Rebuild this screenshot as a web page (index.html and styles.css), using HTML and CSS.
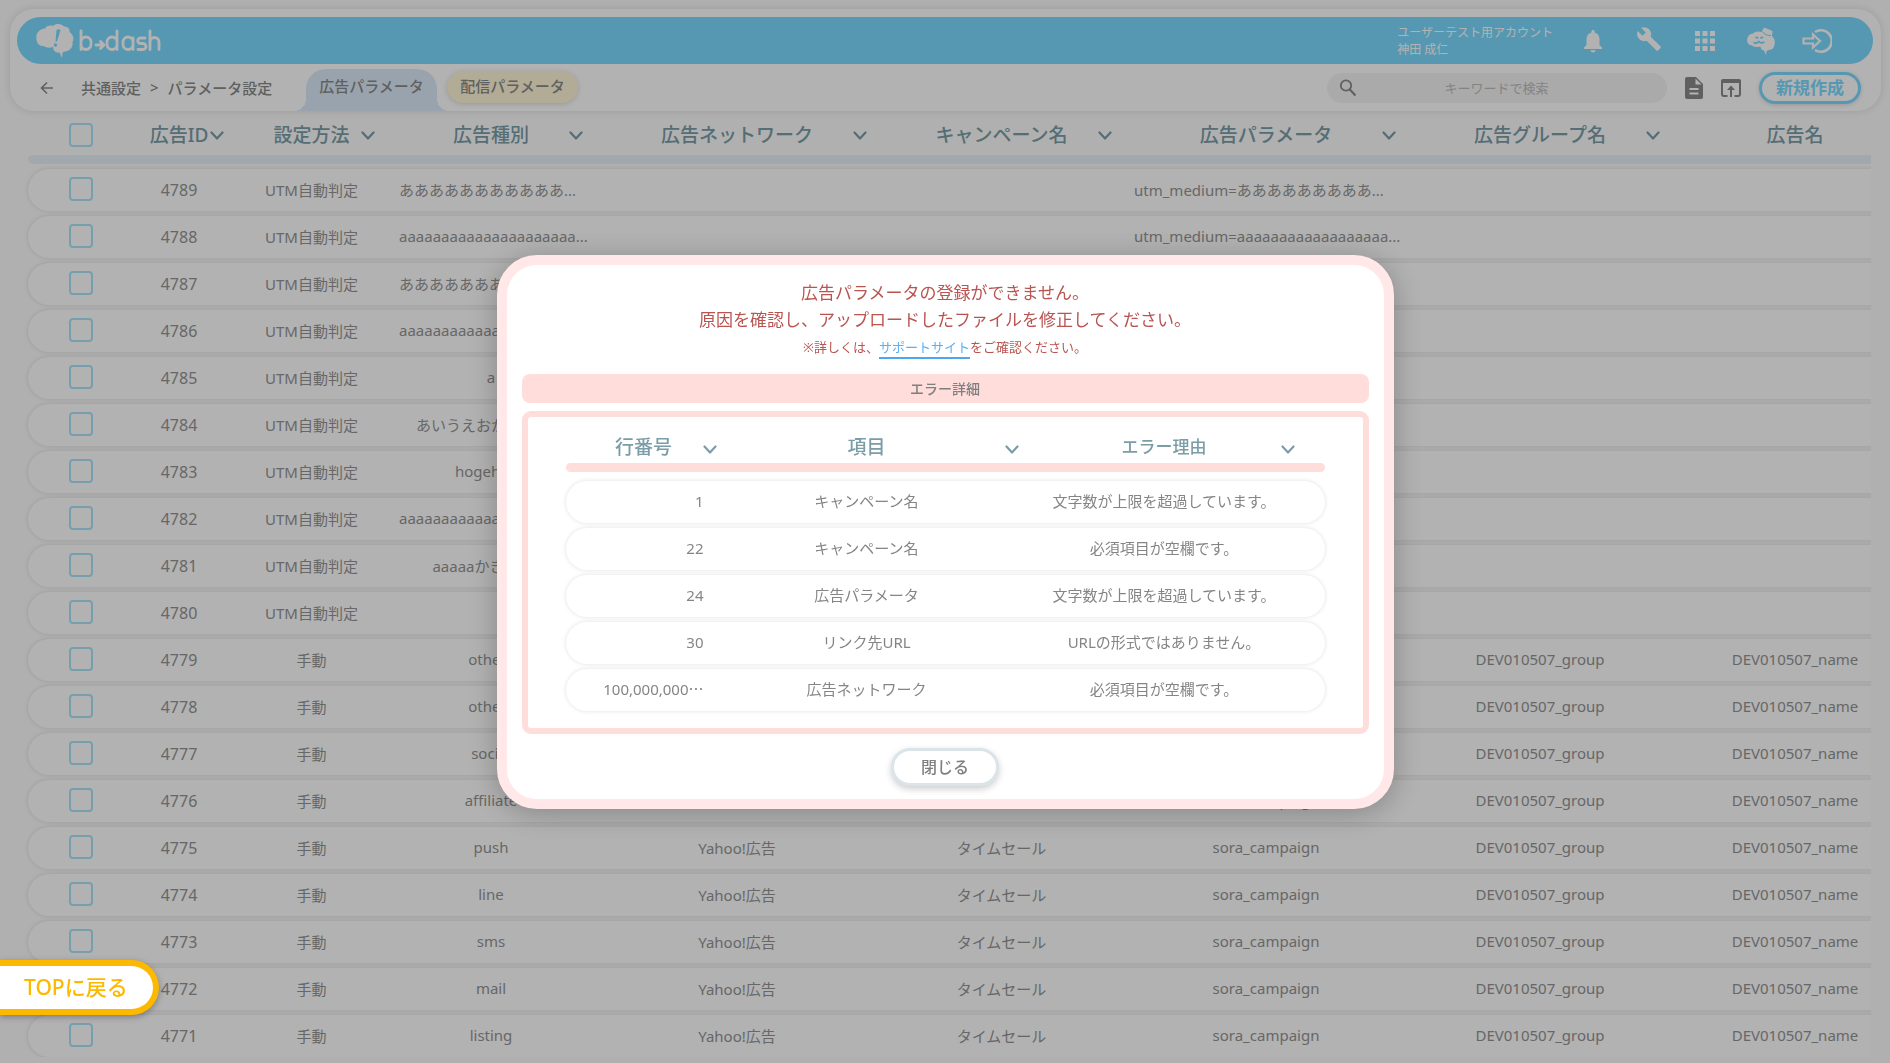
FILE: index.html
```
<!DOCTYPE html>
<html lang="ja">
<head>
    <meta charset="UTF-8">
    <meta name="viewport" content="width=device-width, initial-scale=1.0">
    <title>パラメータ設定 | b→dash</title>
    <link rel="stylesheet" href="styles.css">
</head>
<body>
    <svg class="defs" aria-hidden="true">
        <symbol id="chevron" viewBox="0 0 14 10"><path d="M1.5 1.5 L7 7.5 L12.5 1.5" fill="none" stroke="currentColor" stroke-width="2.2" stroke-linecap="round" stroke-linejoin="round"/></symbol>
    </svg>

    <header class="header">
        <div class="topbar">
            <a class="logo" href="#" aria-label="b→dash">
                <svg class="logo-mark" viewBox="0 0 38 34"><path d="M9 4.500C10 2 14 1 17 2C20-1 26-.3 28 2.500C32 2 34 5 33.500 8C37 10 38.500 15 36.500 18C37.500 23 33.500 27.500 29 27.500L26.500 28.500L26 34L23.500 28.500C19 29 17 26 17 23C14 24 10 24 8 22C3 22.500 0 18 .5 14C-.5 9 4 5 9 4.500Z" fill="#fff"/><path d="M20.500 6Q22.500 4.500 24.500 6L21 17.500H19.500Z" fill="#7cdaff"/><circle cx="19.500" cy="21" r="1.700" fill="#7cdaff"/></svg>
                <svg class="logo-word" viewBox="0 0 84 24" fill="none" stroke="#fff" stroke-width="2.800" stroke-linecap="round" stroke-linejoin="round"><path d="M3 2V20.500M3 13a5 5 0 0 1 10 0v2.500a5 5 0 0 1-10 0M18 16H25M22.500 12.500L26 16L22.500 19.500M39 2V20.500M39 13a5 5 0 0 0-10 0v2.500a5 5 0 0 0 10 0M55 9V20.500M55 13a5 5 0 0 0-10 0v2.500a5 5 0 0 0 10 0M67 9H62.500a2.700 2.700 0 0 0 0 5.500H65a2.700 2.700 0 0 1 0 6H60M72 2V20.500M72 13a4.500 4.500 0 0 1 9 0V20.500"/></svg>
            </a>
            <div class="account">
                <div>ユーザーテスト用アカウント</div>
                <div>神田 成仁</div>
            </div>
            <nav class="tools">
                <a href="#" aria-label="通知"><svg width="20" height="24" viewBox="0 0 20 24"><path d="M10 1c1 0 1.600.7 1.600 1.600v.8C15 4.300 16.500 7 16.500 10v6l2.500 2.500V20H1v-1.500L3.500 16v-6c0-3 1.500-5.700 4.900-6.600v-.8C8.400 1.700 9 1 10 1ZM7.500 21.300h5a2.500 2.300 0 0 1-5 0Z" fill="#fff"/></svg></a>
                <a href="#" aria-label="設定"><svg class="raised" width="26" height="26" viewBox="0 0 24 24"><path d="M22.700 19l-9.100-9.100c.9-2.300.4-5-1.500-6.900-2-2-5-2.400-7.400-1.300L9 6 6 9 1.600 4.700C.4 7.100.9 10.100 2.900 12.100c1.900 1.900 4.600 2.400 6.900 1.500l9.100 9.100c.4.4 1 .4 1.400 0l2.300-2.300c.5-.4.5-1.100.1-1.400Z" fill="#fff"/></svg></a>
                <a href="#" aria-label="アプリ一覧"><svg width="20" height="20" viewBox="0 0 20 20"><path d="M0 0h5v5H0zM7.500 0h5v5h-5zM15 0h5v5h-5zM0 7.500h5v5H0zM7.500 7.500h5v5h-5zM15 7.500h5v5h-5zM0 15h5v5H0zM7.500 15h5v5h-5zM15 15h5v5h-5z" fill="#fff"/></svg></a>
                <a href="#" aria-label="サポート"><svg width="28" height="28" viewBox="0 0 28 28"><path d="M6 6.500Q9 3.500 14.500 5L17 .5L25.500 4L25 9Q29 13 27.500 17.500Q27 22.500 22 23L19.500 24L19 28L17 23.500Q13.500 23 13.500 19.500Q8 21 5 18.500Q0 18 0 12.500Q1 7 6 6.500Z" fill="#fff"/><path d="M15.500 4.500Q17.500 8.500 24 8.500" fill="none" stroke="#7cdaff" stroke-width="1"/><path d="M8.500 11Q10 9.500 11 11.500M13.500 11.500Q14.500 9.500 16 11M6.500 15.500Q10 17 11.800 14.500Q14 17 17.500 15" fill="none" stroke="#7cdaff" stroke-width="1.600"/></svg></a>
                <a href="#" aria-label="ログアウト"><svg width="30" height="26" viewBox="0 0 30 26" fill="none" stroke="#fff" stroke-width="2.200"><path d="M13 4A10.800 10.800 0 1 1 13 22" stroke-width="2.600"/><path d="M1.500 10.500H11V6.500L18 13L11 19.500V15.500H1.500Z"/></svg></a>
            </nav>
        </div>
        <div class="subbar">
            <a class="back" href="#" aria-label="戻る"><svg width="14" height="14" viewBox="0 0 14 14"><path d="M7 1.500L1.500 7L7 12.500M1.500 7H13" fill="none" stroke="currentColor" stroke-width="1.600"/></svg></a>
            <div class="breadcrumb"><span>共通設定</span><span>&gt;</span><span>パラメータ設定</span></div>
            <nav class="tabs">
                <a class="tab tab-active" href="#">広告パラメータ</a>
                <a class="tab tab-other" href="#">配信パラメータ</a>
            </nav>
            <div class="actions">
                <label class="search">
                    <svg width="18" height="18" viewBox="0 0 18 18"><circle cx="7" cy="6.500" r="5.200" fill="none" stroke="currentColor" stroke-width="1.800"/><path d="M10.800 10.500L16.500 16.500" stroke="currentColor" stroke-width="2.200"/></svg>
                    <input type="text" placeholder="キーワードで検索" aria-label="キーワードで検索">
                </label>
                <a class="tool" href="#" aria-label="ファイル"><svg width="18" height="22" viewBox="0 0 18 22"><path d="M2 0H11L18 7V20a2 2 0 0 1-2 2H2a2 2 0 0 1-2-2V2A2 2 0 0 1 2 0ZM10.500 1.500V7.500H16.500ZM4.500 11v2h9v-2ZM4.500 15.500v2h9v-2Z" fill="currentColor" fill-rule="evenodd"/></svg></a>
                <a class="tool" href="#" aria-label="アップロード"><svg width="20" height="18" viewBox="0 0 20 18"><path d="M6.500 17H3a2 2 0 0 1-2-2V2H19V15a2 2 0 0 1-2 2H13.500" fill="none" stroke="currentColor" stroke-width="2"/><path d="M0 4V2A2 2 0 0 1 2 0H18a2 2 0 0 1 2 2V4ZM10 6.500L14 11H11V18H9V11H6Z" fill="currentColor"/></svg></a>
                <button class="create" type="button">新規作成</button>
            </div>
        </div>
    </header>

    <main class="list">
        <table class="grid">
            <thead>
                <tr>
                    <th><input type="checkbox" aria-label="すべて選択"></th>
                    <th>広告ID<svg class="chevron"><use href="#chevron"/></svg></th>
                    <th class="roomy">設定方法<svg class="chevron"><use href="#chevron"/></svg></th>
                    <th>広告種別<svg class="chevron"><use href="#chevron"/></svg></th>
                    <th class="roomy">広告ネットワーク<svg class="chevron"><use href="#chevron"/></svg></th>
                    <th>キャンペーン名<svg class="chevron"><use href="#chevron"/></svg></th>
                    <th class="roomy">広告パラメータ<svg class="chevron"><use href="#chevron"/></svg></th>
                    <th>広告グループ名<svg class="chevron"><use href="#chevron"/></svg></th>
                    <th>広告名</th>
                </tr>
            </thead>
            <tbody>
                <tr><td><input type="checkbox" aria-label="4789"></td><td class="id">4789</td><td>UTM自動判定</td><td class="long">あああああああああああ...</td><td></td><td></td><td class="long param">utm_medium=あああああああああ...</td><td></td><td></td></tr>
                <tr><td><input type="checkbox" aria-label="4788"></td><td class="id">4788</td><td>UTM自動判定</td><td class="long">aaaaaaaaaaaaaaaaaaaaa...</td><td></td><td></td><td class="long param">utm_medium=aaaaaaaaaaaaaaaaaa...</td><td></td><td></td></tr>
                <tr><td><input type="checkbox" aria-label="4787"></td><td class="id">4787</td><td>UTM自動判定</td><td class="long">あああああああああああ...</td><td></td><td></td><td></td><td></td><td></td></tr>
                <tr><td><input type="checkbox" aria-label="4786"></td><td class="id">4786</td><td>UTM自動判定</td><td class="long">aaaaaaaaaaaaaaaaaaaaa...</td><td></td><td></td><td></td><td></td><td></td></tr>
                <tr><td><input type="checkbox" aria-label="4785"></td><td class="id">4785</td><td>UTM自動判定</td><td>a</td><td></td><td></td><td></td><td></td><td></td></tr>
                <tr><td><input type="checkbox" aria-label="4784"></td><td class="id">4784</td><td>UTM自動判定</td><td>あいうえおかきくけこ</td><td></td><td></td><td></td><td></td><td></td></tr>
                <tr><td><input type="checkbox" aria-label="4783"></td><td class="id">4783</td><td>UTM自動判定</td><td>hogehoge</td><td></td><td></td><td></td><td></td><td></td></tr>
                <tr><td><input type="checkbox" aria-label="4782"></td><td class="id">4782</td><td>UTM自動判定</td><td class="long">aaaaaaaaaaaaaaaaaaaaa...</td><td></td><td></td><td></td><td></td><td></td></tr>
                <tr><td><input type="checkbox" aria-label="4781"></td><td class="id">4781</td><td>UTM自動判定</td><td>aaaaaかきくけこ</td><td></td><td></td><td></td><td></td><td></td></tr>
                <tr><td><input type="checkbox" aria-label="4780"></td><td class="id">4780</td><td>UTM自動判定</td><td></td><td></td><td></td><td></td><td></td><td></td></tr>
                <tr><td><input type="checkbox" aria-label="4779"></td><td class="id">4779</td><td>手動</td><td>others</td><td>Yahoo!広告</td><td>タイムセール</td><td>sora_campaign</td><td>DEV010507_group</td><td>DEV010507_name</td></tr>
                <tr><td><input type="checkbox" aria-label="4778"></td><td class="id">4778</td><td>手動</td><td>others</td><td>Yahoo!広告</td><td>タイムセール</td><td>sora_campaign</td><td>DEV010507_group</td><td>DEV010507_name</td></tr>
                <tr><td><input type="checkbox" aria-label="4777"></td><td class="id">4777</td><td>手動</td><td>social</td><td>Yahoo!広告</td><td>タイムセール</td><td>sora_campaign</td><td>DEV010507_group</td><td>DEV010507_name</td></tr>
                <tr><td><input type="checkbox" aria-label="4776"></td><td class="id">4776</td><td>手動</td><td>affiliate</td><td>Yahoo!広告</td><td>タイムセール</td><td>sora_campaign</td><td>DEV010507_group</td><td>DEV010507_name</td></tr>
                <tr><td><input type="checkbox" aria-label="4775"></td><td class="id">4775</td><td>手動</td><td>push</td><td>Yahoo!広告</td><td>タイムセール</td><td>sora_campaign</td><td>DEV010507_group</td><td>DEV010507_name</td></tr>
                <tr><td><input type="checkbox" aria-label="4774"></td><td class="id">4774</td><td>手動</td><td>line</td><td>Yahoo!広告</td><td>タイムセール</td><td>sora_campaign</td><td>DEV010507_group</td><td>DEV010507_name</td></tr>
                <tr><td><input type="checkbox" aria-label="4773"></td><td class="id">4773</td><td>手動</td><td>sms</td><td>Yahoo!広告</td><td>タイムセール</td><td>sora_campaign</td><td>DEV010507_group</td><td>DEV010507_name</td></tr>
                <tr><td><input type="checkbox" aria-label="4772"></td><td class="id">4772</td><td>手動</td><td>mail</td><td>Yahoo!広告</td><td>タイムセール</td><td>sora_campaign</td><td>DEV010507_group</td><td>DEV010507_name</td></tr>
                <tr><td><input type="checkbox" aria-label="4771"></td><td class="id">4771</td><td>手動</td><td>listing</td><td>Yahoo!広告</td><td>タイムセール</td><td>sora_campaign</td><td>DEV010507_group</td><td>DEV010507_name</td></tr>
            </tbody>
        </table>
    </main>

    <div class="overlay">
        <section class="modal" role="dialog" aria-modal="true" aria-labelledby="modalTitle">
            <h2 class="modal-title" id="modalTitle">広告パラメータの登録ができません。<br>原因を確認し、アップロードしたファイルを修正してください。</h2>
            <p class="modal-note">※詳しくは、<a href="#">サポートサイト</a>をご確認ください。</p>
            <h3 class="error-label">エラー詳細</h3>
            <div class="error-box">
                <table class="errors">
                    <thead>
                        <tr>
                            <th class="line">行番号<svg class="chevron"><use href="#chevron"/></svg></th>
                            <th class="item">項目<svg class="chevron"><use href="#chevron"/></svg></th>
                            <th class="reason">エラー理由<svg class="chevron"><use href="#chevron"/></svg></th>
                        </tr>
                    </thead>
                    <tbody>
                        <tr><td>1</td><td>キャンペーン名</td><td>文字数が上限を超過しています。</td></tr>
                        <tr><td>22</td><td>キャンペーン名</td><td>必須項目が空欄です。</td></tr>
                        <tr><td>24</td><td>広告パラメータ</td><td>文字数が上限を超過しています。</td></tr>
                        <tr><td>30</td><td>リンク先URL</td><td>URLの形式ではありません。</td></tr>
                        <tr><td>100,000,000<span class="dots">…</span></td><td>広告ネットワーク</td><td>必須項目が空欄です。</td></tr>
                    </tbody>
                </table>
            </div>
            <button class="close" type="button">閉じる</button>
        </section>
    </div>

    <a class="to-top" href="#">TOPに戻る</a>
</body>
</html>
```
FILE: styles.css
```
* {
    box-sizing: border-box;
}

body {
    margin: 0;
    padding-top: 9px;
    height: 100vh;
    overflow: hidden;
    background: #fcfcfc;
    color: #8a8a8a;
    font-family: "Noto Sans", "Noto Sans CJK JP", sans-serif;
    font-size: 15px;
}

a {
    color: inherit;
    text-decoration: none;
}

button,
input {
    font-family: inherit;
}

svg {
    display: block;
    flex: none;
}

.defs {
    position: absolute;
    width: 0;
    height: 0;
}

/* header */
.header {
    margin: 0 9px 0 10px;
    padding: 8px 8px 0 7px;
    border-radius: 24px;
    background: #fff;
    box-shadow: 0 0 8px rgba(0, 0, 0, 0.12);
}

.topbar {
    display: flex;
    align-items: center;
    height: 47px;
    padding: 0 28px 0 19px;
    border-radius: 24px;
    background: #7cdaff;
    color: #fff;
}

.logo {
    display: flex;
    align-items: center;
    gap: 4px;
    margin-right: auto;
}

.logo-mark {
    width: 38px;
    height: 34px;
}

.logo-word {
    width: 84px;
    height: 24px;
}

.account {
    margin-right: 12px;
    font-size: 12px;
    line-height: 17px;
}

.tools {
    display: flex;
    align-items: center;
}

.tools a {
    display: flex;
    justify-content: center;
    width: 56px;
}

.raised {
    margin-bottom: 4px;
}

.subbar {
    display: flex;
    align-items: center;
    height: 47px;
    padding: 0 12px 0 23px;
}

.back {
    margin-right: 27px;
}

.breadcrumb {
    display: flex;
    gap: 9px;
    width: 225px;
    font-weight: 500;
}

.tabs {
    display: flex;
    gap: 10px;
    align-self: stretch;
    align-items: stretch;
    padding-top: 5px;
    font-weight: 500;
}

.tab {
    width: 131px;
    line-height: 34px;
    text-align: center;
}

.tab-active {
    position: relative;
    border-radius: 20px 20px 0 0;
    background: #dceaf8;
}

.tab-active::before,
.tab-active::after {
    content: "";
    position: absolute;
    bottom: 0;
    width: 12px;
    height: 12px;
}

.tab-active::before {
    right: 100%;
    background: radial-gradient(circle at 0 0, transparent 12px, #dceaf8 12px);
}

.tab-active::after {
    left: 100%;
    background: radial-gradient(circle at 100% 0, transparent 12px, #dceaf8 12px);
}

.tab-other {
    height: 32px;
    margin-top: 2px;
    line-height: 31px;
    border-radius: 16px;
    background: #fff5d7;
    box-shadow: 0 1px 5px rgba(0, 0, 0, 0.15);
}

.actions {
    display: flex;
    align-items: center;
    gap: 18px;
    margin-left: auto;
}

.search {
    display: flex;
    align-items: center;
    width: 340px;
    height: 30px;
    padding: 0 31px 0 12px;
    border-radius: 15px;
    background: #f4f4f4;
}

.search input {
    flex: 1;
    min-width: 0;
    border: 0;
    background: none;
    font-size: 13px;
    text-align: center;
}

.search input::placeholder {
    color: #bcbcbc;
}

.create {
    width: 102px;
    height: 32px;
    padding: 0;
    border: 3px solid #7cdaff;
    border-radius: 16px;
    background: #fff;
    box-shadow: 0 1px 4px rgba(0, 0, 0, 0.15);
    color: #7cdaff;
    font-size: 17px;
    font-weight: 700;
    line-height: 24px;
}

/* list */
.list {
    margin: 0 19px 0 24px;
    padding: 4px 0 0 4px;
    overflow: hidden;
}

.grid,
.errors {
    display: block;
    border-spacing: 0;
}

thead,
tbody {
    display: block;
}

.grid thead,
.grid tbody {
    width: 1902px;
}

.grid tr {
    display: grid;
    grid-template-columns: 106px 90px 175px 184px 308px 221px 308px 240px 270px;
    align-items: center;
}

/* coloured bar under the column titles */
thead::after {
    content: "";
    display: block;
    height: 9px;
    border-radius: 5px;
    background: #e7f1f9;
}

th,
td {
    padding: 0;
    text-align: center;
    white-space: nowrap;
}

th {
    position: relative;
    color: #7a9da7;
    font-size: 19px;
    font-weight: 500;
    line-height: 28px;
}

.chevron {
    position: absolute;
    top: 10px;
    right: 0;
    width: 14px;
    height: 10px;
}

.roomy .chevron {
    right: 24px;
}

.grid thead tr {
    height: 40px;
}

.grid tbody tr,
.errors tbody tr {
    height: 42px;
    margin-top: 5px;
    border-radius: 21px;
    background: #fff;
    box-shadow: 0 0 4px rgba(0, 0, 0, 0.13);
}

tbody {
    color: #949494;
}

td {
    padding-bottom: 2px;
}

.grid .id {
    padding-bottom: 0;
    font-size: 16px;
}

.grid .long {
    text-align: left;
}

.grid .param {
    padding-left: 22px;
}

input[type="checkbox"] {
    appearance: none;
    display: block;
    width: 24px;
    height: 24px;
    margin: 0 auto;
    border: 2px solid #aae4fa;
    border-radius: 4px;
}

/* error dialog */
.overlay {
    position: fixed;
    inset: 0;
    display: flex;
    align-items: center;
    justify-content: center;
    background: rgba(0, 0, 0, 0.3);
}

.modal {
    width: 897px;
    padding: 14px 15px 13px;
    border: 10px solid #ffe8e7;
    border-radius: 40px;
    background: #fff;
    box-shadow: 0 4px 30px rgba(0, 0, 0, 0.25);
    color: #b95450;
    text-align: center;
}

.modal-title {
    margin: 0;
    font-size: 17px;
    font-weight: 400;
    line-height: 27px;
}

.modal-note {
    margin: 2px 0 14px;
    font-size: 13px;
    line-height: 25px;
}

.modal-note a {
    padding-bottom: 1px;
    border-bottom: 2px solid #4da6ee;
    color: #5cb0f2;
}

.error-label {
    margin: 0 0 8px;
    border-radius: 8px;
    background: #ffdddb;
    color: #7f7f7f;
    font-size: 14px;
    font-weight: 500;
    line-height: 29px;
}

.error-box {
    padding: 15px 38px 17px;
    border: 6px solid #ffdddb;
    border-radius: 9px;
}

.errors tr {
    display: grid;
    grid-template-columns: 156px 290px 1fr;
    align-items: center;
}

.errors thead {
    margin-bottom: 9px;
}

.errors thead tr {
    height: 31px;
}

.errors thead::after {
    background: #ffdddb;
}

.errors tbody {
    color: #858585;
}

.errors td:first-child {
    padding-right: 18px;
    text-align: right;
}

.errors td:last-child {
    padding-right: 8px;
}

.dots {
    font-family: "Noto Sans CJK JP", sans-serif;
}

.errors .chevron {
    top: 12px;
}

.line .chevron {
    right: 5px;
}

.item .chevron {
    right: -7px;
}

.reason .chevron {
    right: 30px;
}

.errors .reason {
    padding-right: 8px;
    font-size: 17px;
}

.close {
    width: 108px;
    height: 38px;
    margin-top: 14px;
    padding: 0;
    border: 3px solid #dbe5e9;
    border-radius: 19px;
    background: #fff;
    box-shadow: 0 3px 7px rgba(0, 0, 0, 0.2);
    color: #7f7f7f;
    font-size: 16px;
    font-weight: 500;
    line-height: 30px;
}

.to-top {
    position: fixed;
    left: 0;
    bottom: 48px;
    padding: 0 25px 0 24px;
    border: 6px solid #fdb900;
    border-left: 0;
    border-radius: 0 28px 28px 0;
    background: #fff;
    box-shadow: 0 2px 6px rgba(0, 0, 0, 0.3);
    color: #fdb900;
    font-size: 21px;
    font-weight: 500;
    line-height: 43px;
}
```
